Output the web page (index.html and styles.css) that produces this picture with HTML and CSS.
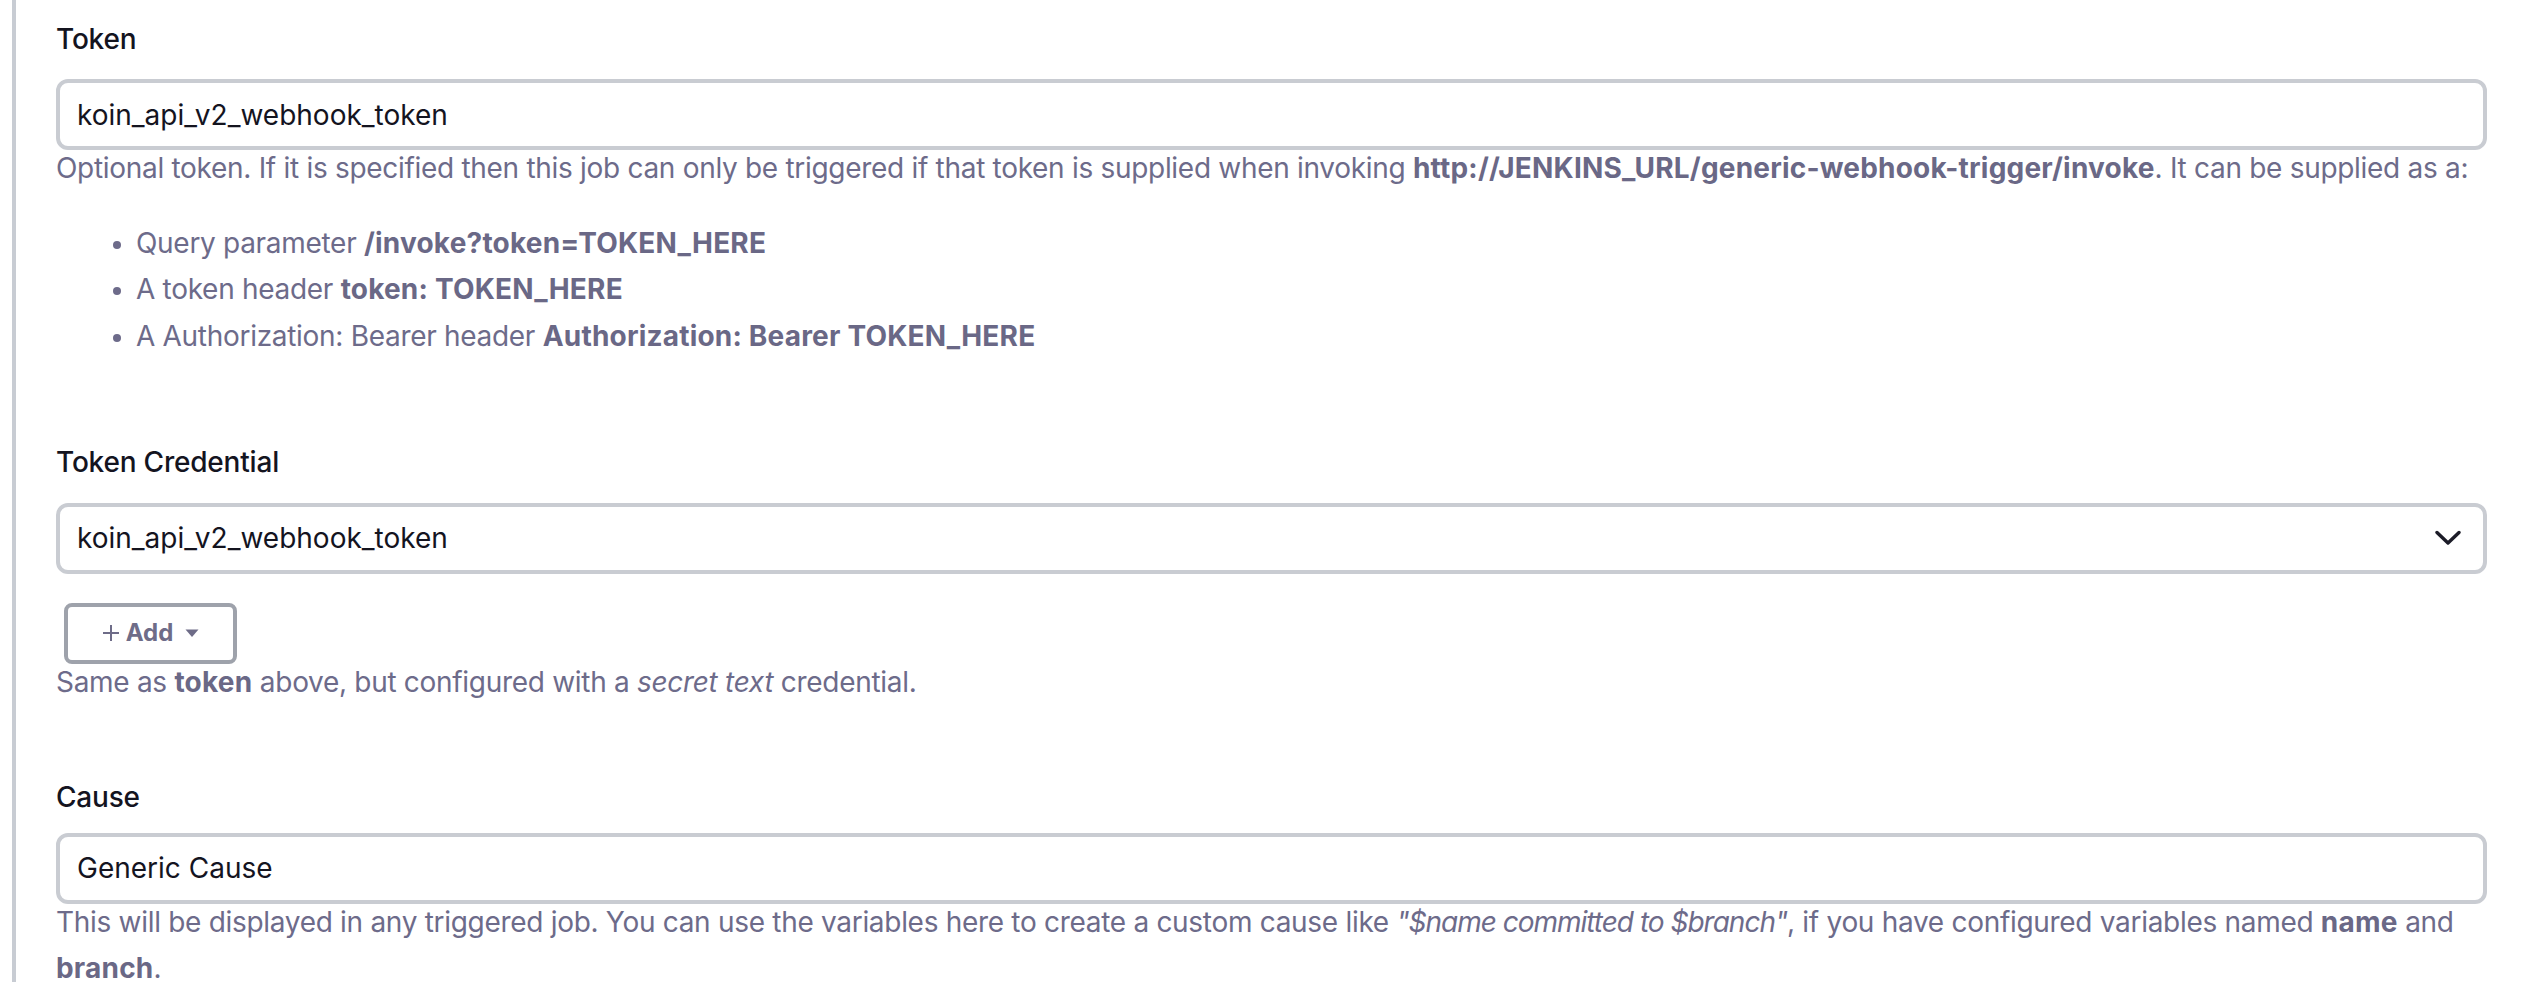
FILE: index.html
```html
<!DOCTYPE html>
<html lang="en">
<head>
<meta charset="utf-8">
<title>Generic Webhook Trigger</title>
<link rel="stylesheet" href="styles.css">
</head>
<body>
<div class="section">
  <div class="field field-first">
    <div class="label">Token</div>
    <div class="input"><span class="value">koin_api_v2_webhook_token</span></div>
    <div class="help">
      <div>Optional token. If it is specified then this job can only be triggered if that token is supplied when invoking <b>http://JENKINS_URL/generic-webhook-trigger/invoke</b>. It can be supplied as a:</div>
      <ul class="list">
        <li>Query parameter <b>/invoke?token=TOKEN_HERE</b></li>
        <li>A token header <b>token: TOKEN_HERE</b></li>
        <li>A Authorization: Bearer header <b>Authorization: Bearer TOKEN_HERE</b></li>
      </ul>
    </div>
  </div>

  <div class="field field-cred">
    <div class="label">Token Credential</div>
    <div class="input select">
      <span class="value">koin_api_v2_webhook_token</span>
      <svg class="chevron" width="26" height="16" viewBox="0 0 26 16"><path d="M2 2.5 L13 13 L24 2.5" fill="none" stroke="#1c1c28" stroke-width="3.4" stroke-linecap="round" stroke-linejoin="round"/></svg>
    </div>
    <div class="add-row">
      <div class="add-btn">
        <svg class="plus" width="18" height="18" viewBox="0 0 18 18"><path d="M9 1 V17 M1 9 H17" stroke="#6e6c88" stroke-width="2"/></svg>
        <span class="add-text">Add</span>
        <svg class="caret" width="14" height="9" viewBox="0 0 14 9"><path d="M0.5 0.5 H13.5 L7 8 Z" fill="#6e6c88"/></svg>
      </div>
    </div>
    <div class="help">Same as <b>token</b> above, but configured with a <i>secret text</i> credential.</div>
  </div>

  <div class="field field-cause">
    <div class="label">Cause</div>
    <div class="input"><span class="value">Generic Cause</span></div>
    <div class="help">This will be displayed in any triggered job. You can use the variables here to create a custom cause like <i class="example">"$name committed to $branch"</i>, if you have configured variables named <b>name</b> and <b>branch</b>.</div>
  </div>
</div>
</body>
</html>
```

FILE: styles.css
```css
html, body {
  margin: 0;
  padding: 0;
  background: #ffffff;
}
body {
  font-family: Inter, "Noto Sans", "Liberation Sans", sans-serif;
  font-size: 28px;
  line-height: 1.66;
  color: #14141f;
  overflow: hidden;
  height: 982px;
}
.section {
  margin-left: 12px;
  margin-right: 37px;
  border-left: 4px solid #c8ccd3;
  padding-left: 40px;
  padding-top: 16px;
  min-height: 1200px;
}
.label {
  font-weight: 500;
  color: #14141f;
  margin-bottom: 17px;
  letter-spacing: -0.2px;
}
.input {
  box-sizing: border-box;
  height: 71px;
  border: 4px solid #c9ccd2;
  border-radius: 12px;
  padding: 0 17px;
  display: flex;
  align-items: center;
  background: #fff;
}
.value {
  color: #14141f;
}
.select {
  justify-content: space-between;
  padding-right: 22px;
}
.chevron {
  display: block;
}
.help {
  color: #6d6b8a;
  margin-top: -5px;
  letter-spacing: -0.3px;
}
.help b {
  font-weight: 700;
  color: #6a6886;
  letter-spacing: 0.2px;
}
.help .example {
  letter-spacing: -1px;
}
.list {
  margin: 28px 0;
  padding-left: 80px;
}
.list li::marker {
  font-size: 25px;
}
.field-cred {
  margin-top: 80px;
}
.field-cause {
  margin-top: 69px;
}
.field-cause .label {
  margin-bottom: 12px;
}
.add-row {
  display: flex;
  margin-top: 29px;
  padding-left: 8px;
}
.add-btn {
  box-sizing: border-box;
  width: 173px;
  height: 61px;
  border: 4px solid #9ea2ab;
  border-radius: 8px;
  display: flex;
  align-items: center;
  justify-content: center;
  gap: 6px;
  color: #6e6c88;
  font-weight: 700;
  font-size: 24px;
  background: #fff;
}
.plus, .caret {
  display: block;
}
.caret {
  margin-left: 6px;
}
```
